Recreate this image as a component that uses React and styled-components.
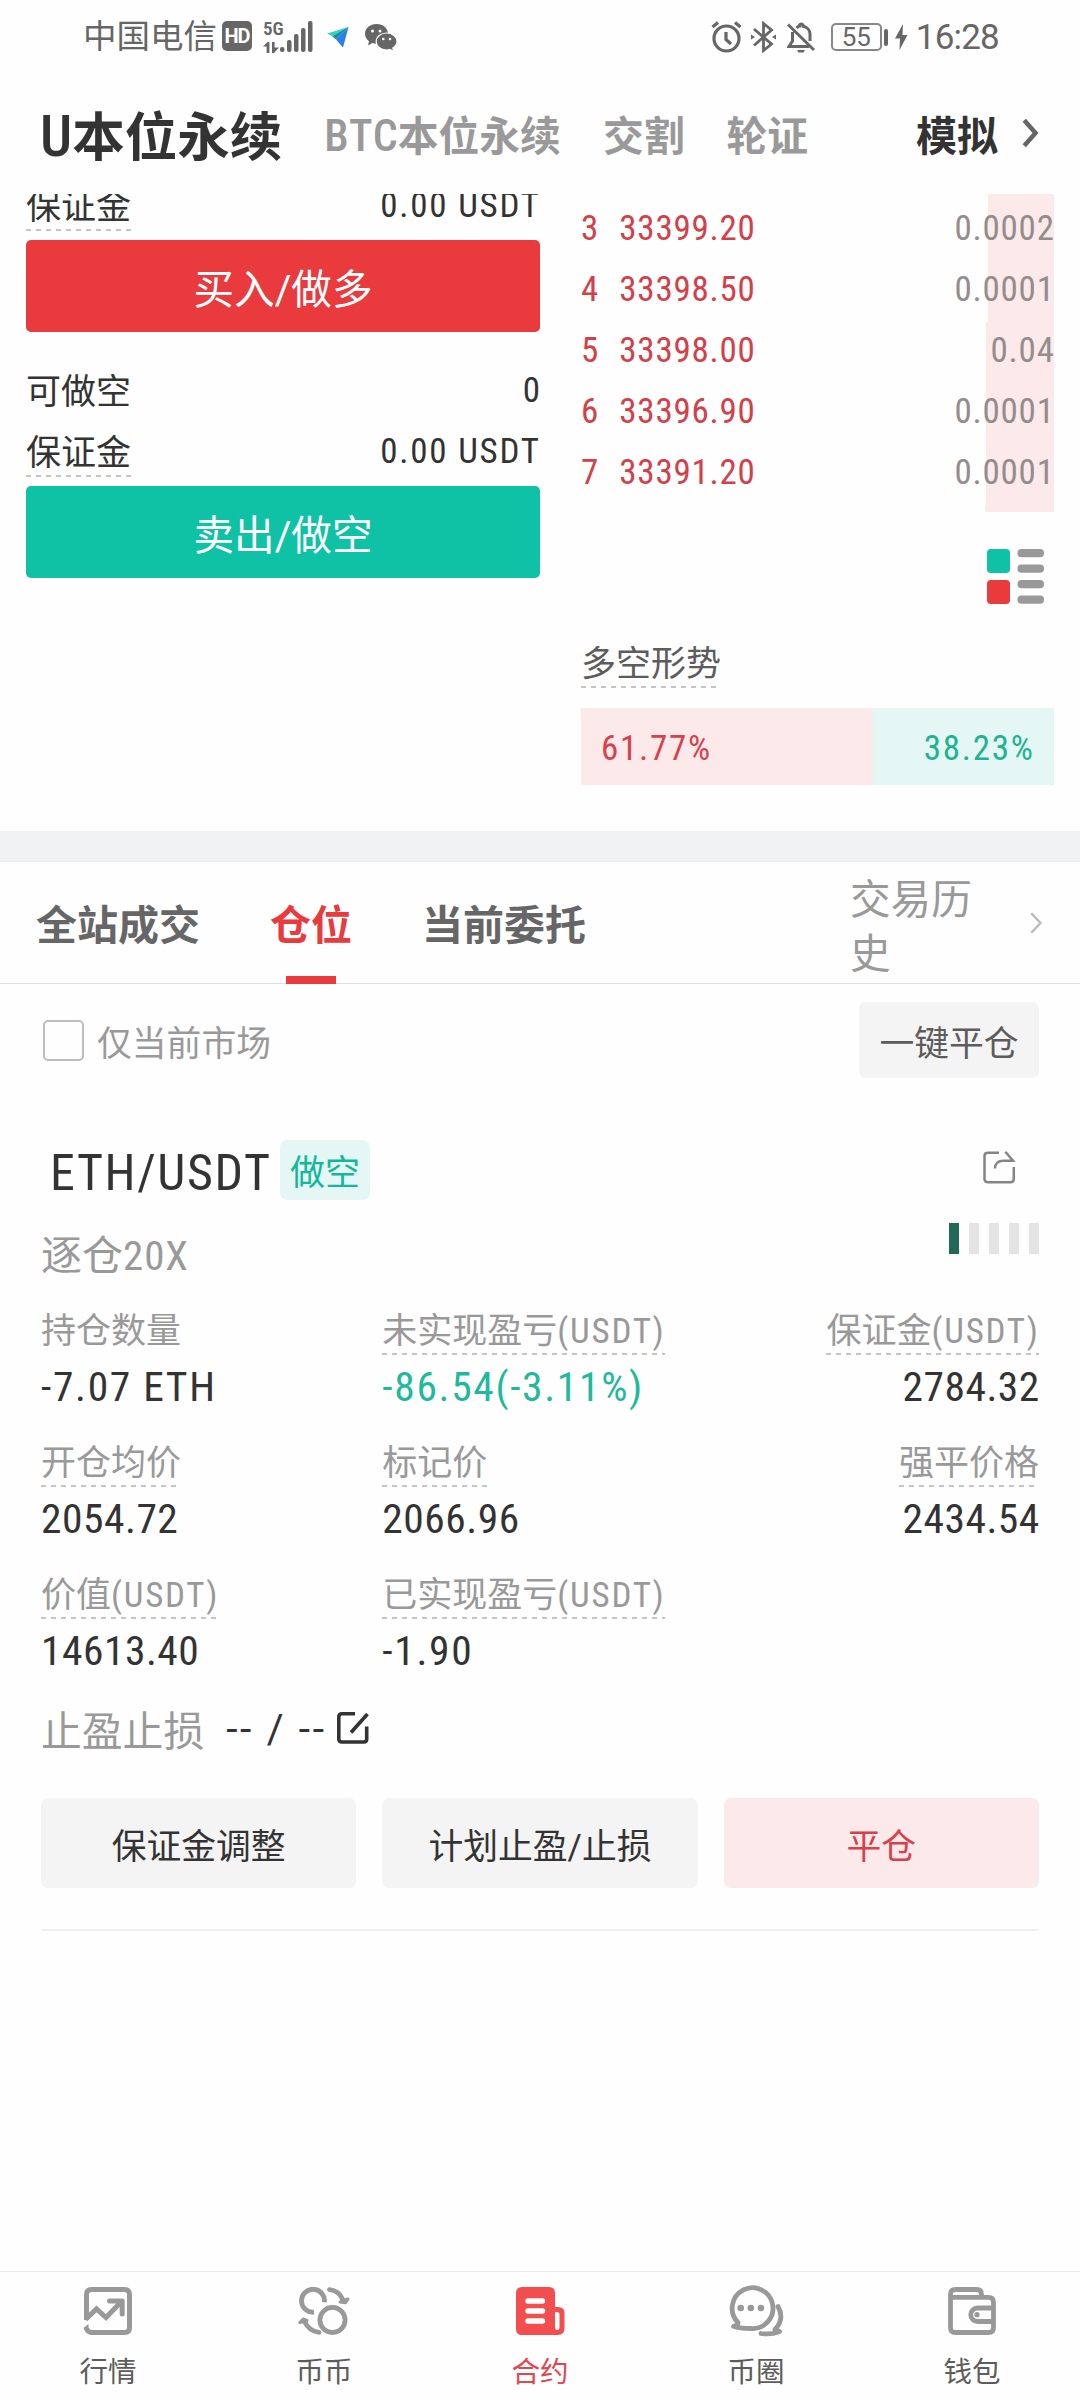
import styled, { createGlobalStyle, css } from "styled-components";

const colors = {
  red: "#e93b3d",
  green: "#10c2a5",
  dark: "#333333",
  mid: "#666666",
  light: "#999999",
  redBg: "#fce9ea",
  greenBg: "#e5f7f5",
  greyBg: "#f4f4f4",
};

const GlobalStyle = createGlobalStyle`
  * { box-sizing: border-box; }
  body {
    margin: 0;
    background: #fefefe;
    font-family: Roboto, "Noto Sans CJK SC", sans-serif;
    color: ${colors.dark};
  }
  svg { display: block; flex: none; }
`;

const Screen = styled.div`
  display: flex;
  flex-direction: column;
  width: 1080px;
  height: 2400px;
  overflow: hidden;
  white-space: nowrap;
`;

// latin letters and digits use a narrow face next to the chinese text
const Num = styled.span`
  margin-right: -0.02em;
  font-family: "Roboto Condensed", Roboto, sans-serif;
  font-weight: ${p => p.$weight || 400};
  letter-spacing: ${p => (p.$wide ? 0.05 : 0.022)}em;
`;

/* ---------- status bar ---------- */
const StatusBar = styled.div`
  display: flex;
  align-items: center;
  height: 74px;
  padding: 0 81px 0 83px;
  color: #666;
`;
const Carrier = styled.span`
  font-size: 33.5px;
  line-height: 78px;
`;
const HdBadge = styled.span`
  width: 30px;
  height: 30px;
  margin: -2px 0 0 5px;
  border-radius: 5px;
  background: #666;
  color: #fff;
  font-size: 20px;
  font-weight: 700;
  line-height: 31px;
  text-align: center;
  letter-spacing: -1px;
`;
const Network = styled.div`
  display: flex;
  flex-direction: column;
  align-items: flex-start;
  justify-content: space-between;
  width: 17px;
  height: 32px;
  margin: -1px 0 0 11px;
  font-family: "Roboto Condensed", Roboto, sans-serif;
  font-size: 19px;
  font-weight: 600;
  line-height: 16px;
`;
const Spacer = styled.div`
  flex: ${p => (p.$w ? `0 0 ${p.$w}px` : 1)};
`;
const Battery = styled.div`
  display: flex;
  align-items: center;
  justify-content: center;
  width: 51px;
  height: 28px;
  border: 2px solid #888;
  border-radius: 5px;
  font-size: 26px;
`;
const BatteryTip = styled.div`
  width: 4px;
  height: 17px;
  margin-left: 2px;
  border-radius: 2px;
  background: #666;
`;
const Clock = styled.span`
  font-size: 35px;
  letter-spacing: -0.8px;
`;

/* ---------- top tabs ---------- */
const TopTabs = styled.div`
  display: flex;
  align-items: center;
  height: 120px;
  padding: 0 40px 2px 40px;
  font-weight: 700;
`;
const TopTab = styled.span`
  margin-right: 42px;
  font-size: ${p => (p.$active ? 52.5 : 40.8)}px;
  color: ${p => (p.$active ? colors.dark : colors.light)};
  ${Num} {
    font-size: 1.08em;
    letter-spacing: 0.02em;
  }
`;
const Simulate = styled.span`
  margin-left: auto;
  margin-right: 24px;
  font-size: 41px;
`;

/* ---------- trade area ---------- */
const TradeArea = styled.div`
  display: flex;
  justify-content: space-between;
  height: 637px;
  padding: 0 26px;
  overflow: hidden;
`;
const OrderPanel = styled.div`
  width: 514px;
  margin-top: -19px;
`;
const InfoRow = styled.div`
  display: flex;
  align-items: center;
  justify-content: space-between;
  height: 61px;
  font-size: 35px;
`;
const dashed = css`
  background: repeating-linear-gradient(90deg, #c4c4c4 0 5px, transparent 5px 10px) left bottom / 100% 2px no-repeat;
`;
const Label = styled.span`
  display: inline-block;
  height: 50px;
  line-height: 53px;
  font-size: 35px;
  color: ${p => p.$color || "inherit"};
  ${p => p.$dashed && dashed}
`;
const OrderButton = styled.button`
  display: block;
  width: 100%;
  height: 92px;
  margin: 4px 0 28px;
  padding: 0;
  border: none;
  border-radius: 5px;
  background: ${p => p.$bg};
  color: #fff;
  font: inherit;
  font-size: 40.6px;
`;

const BookPanel = styled.div`
  display: flex;
  flex-direction: column;
  width: 473px;
`;
const BookList = styled.div`
  height: 318px;
  overflow: hidden;
`;
const BookRows = styled.div`
  margin-top: -55px;
`;
const BookRow = styled.div`
  display: flex;
  align-items: center;
  height: 61px;
  padding-bottom: 5px;
  font-size: 35px;
  color: #d3404a;
  background: linear-gradient(${colors.redBg}, ${colors.redBg}) right / ${p => p.$depth}px 100% no-repeat;
`;
const Level = styled(Num)`
  width: 39px;
`;
const Amount = styled(Num)`
  margin-left: auto;
  color: #948c8d;
`;
const BookMode = styled.div`
  align-self: flex-end;
  margin: 37px 10px 34px 0;
`;
const RatioBar = styled.div`
  display: flex;
  height: 77px;
  margin-top: 20px;
  font-size: 35px;
  line-height: 82px;
`;
const RatioPart = styled.div`
  width: ${p => p.$w}px;
  padding: 0 20px;
  text-align: ${p => p.$align};
  color: ${p => p.$color};
  background: ${p => p.$bg};
`;

/* ---------- positions ---------- */
const Divider = styled.div`
  height: 31px;
  background: #f0f2f4;
  border-bottom: 1px solid #ebedef;
`;
const TabBar = styled.div`
  display: flex;
  align-items: stretch;
  height: 122px;
  padding: 0 37px 0 36px;
  border-bottom: 1px solid #dedede;
`;
const Tab = styled.div`
  display: flex;
  flex-direction: column;
  align-items: center;
  height: 122px;
  margin-right: 70px;
  font-size: 41px;
  font-weight: 700;
  line-height: 129px;
  color: ${p => (p.$active ? colors.red : colors.mid)};
  &::after {
    content: "";
    flex: none;
    width: 50px;
    height: 8px;
    margin-top: -15px;
    background: ${p => (p.$active ? colors.red : "transparent")};
  }
`;
const History = styled.div`
  width: 131px;
  margin: 11px 49px 0 auto;
  font-size: 40.6px;
  line-height: 54px;
  color: ${colors.light};
  white-space: normal;
`;
const HistoryArrow = styled.div`
  align-self: center;
`;

const Positions = styled.div`
  display: flex;
  flex-direction: column;
  flex: 1;
  padding: 0 41px;
`;
const FilterRow = styled.div`
  display: flex;
  align-items: center;
  height: 76px;
  margin-top: 18px;
  font-size: 34.8px;
  color: ${colors.light};
`;
const Checkbox = styled.span`
  width: 41px;
  height: 41px;
  margin: 0 13px 0 2px;
  border: 2.5px solid #bdbdbd;
  border-radius: 5px;
`;
const FilterText = styled.span`
  padding-top: 2px;
`;
const CloseAll = styled.button`
  width: 180px;
  height: 76px;
  margin-left: auto;
  padding: 2px 0 0;
  border: none;
  border-radius: 7px;
  background: ${colors.greyBg};
  color: #5c5c5c;
  font: inherit;
`;
const PairRow = styled.div`
  display: flex;
  align-items: center;
  height: 60px;
  margin-top: 62px;
  padding: 0 23px 0 9px;
`;
const Pair = styled(Num)`
  width: 222px;
  margin: 0;
  padding-top: 5px;
  font-size: 50px;
  letter-spacing: 0.032em;
`;
const Side = styled.span`
  width: 90px;
  height: 60px;
  margin-left: 8px;
  border-radius: 7px;
  background: ${colors.greenBg};
  color: #14b799;
  font-size: 35px;
  line-height: 68px;
  text-align: center;
`;
const ShareBox = styled.div`
  margin: -6px 0 0 auto;
`;
const LeverRow = styled.div`
  display: flex;
  justify-content: space-between;
  height: 105px;
  padding-top: 23px;
  font-size: 41px;
  line-height: 67px;
  color: ${colors.light};
`;
const Risk = styled.div`
  display: flex;
  gap: 10px;
`;
const RiskBar = styled.span`
  width: 10px;
  height: 31px;
  background: ${p => (p.$on ? "#226a57" : "#e4e4e4")};
`;
const Grid = styled.div`
  display: grid;
  grid-template-columns: repeat(3, 1fr);
  gap: 18px 26px;
`;
const Cell = styled.div`
  display: flex;
  flex-direction: column;
  align-items: ${p => (p.$right ? "flex-end" : "flex-start")};
`;
const Value = styled(Num)`
  height: 64px;
  font-size: 41.5px;
  line-height: 64px;
  letter-spacing: ${p => (p.$wide ? 0.04 : 0.012)}em;
  color: ${p => p.$color || colors.dark};
`;
const StopRow = styled.div`
  display: flex;
  align-items: center;
  height: 60px;
  margin-top: 15px;
  font-size: 40.8px;
  color: ${colors.light};
`;
const StopValue = styled.span`
  width: 111px;
  margin-left: 22px;
  padding-top: 2px;
  letter-spacing: 2.6px;
  color: ${colors.dark};
`;
const Actions = styled.div`
  display: grid;
  grid-template-columns: repeat(3, 1fr);
  gap: 26px;
  margin-top: 40px;
  padding-bottom: 41px;
  border-bottom: 2px solid #efefef;
`;
const Action = styled.button`
  height: 90px;
  padding: 1px 0 0;
  border: none;
  border-radius: 7px;
  background: ${p => (p.$danger ? colors.redBg : colors.greyBg)};
  color: ${p => (p.$danger ? "#d8414b" : colors.dark)};
  font: inherit;
  font-size: 34.8px;
`;

/* ---------- bottom nav ---------- */
const Nav = styled.nav`
  display: grid;
  grid-template-columns: repeat(5, 1fr);
  height: 129px;
  border-top: 1px solid #e9eae6;
`;
const NavItem = styled.div`
  display: flex;
  flex-direction: column;
  align-items: center;
  padding-top: 13px;
  font-size: 28.5px;
  line-height: 40px;
  color: ${p => (p.$active ? "#e0474f" : "#5c5c5c")};
`;
const NavIcon = styled.div`
  display: flex;
  align-items: center;
  height: 52px;
  margin-bottom: 16px;
`;

/* ---------- icons ---------- */
const Signal = () => (
  <svg width="33" height="32" viewBox="0 0 33 32" fill="#666">
    <rect x="0" y="26" width="4.5" height="5" rx="2" />
    <rect x="7" y="19" width="4.5" height="12" rx="2" />
    <rect x="14" y="13" width="4.5" height="18" rx="2" />
    <rect x="21" y="7" width="4.5" height="24" rx="2" />
    <rect x="28" y="0" width="4.5" height="31" rx="2" />
  </svg>
);

const DataArrows = () => (
  <svg width="16" height="11" viewBox="0 0 16 11" fill="#666">
    <path d="M0 4.5 4.6 0H6.4V11H3.6V4.5ZM9 0h2.6v5.5H16L11 11H9Z" />
  </svg>
);

const Plane = () => (
  <svg width="22" height="21" viewBox="0 0 22 21">
    <path d="M0 6.5 21.5 0 9 11Z" fill="#35d3bd" />
    <path d="M21.5 0 5.5 9.5 9 12.5Z" fill="#1c8f9e" />
    <path d="M21.5 0 16 20.5 9 12.5Z" fill="#2b7df0" />
  </svg>
);

const WeChat = () => (
  <svg width="32" height="27" viewBox="0 0 32 27">
    <path d="M11.5 0C5 0 0 4.3 0 9.8c0 3.2 1.6 5.7 4 7.5L3 21.5l4.3-2.4c1.3.4 2.7.6 4.2.6 6.5 0 11.5-4.3 11.5-9.9S18 0 11.5 0Z" fill="#666" />
    <path d="M21.5 9C15.7 9 11.2 12.8 11.2 17.5S15.7 26 21.5 26c1.2 0 2.3-.2 3.4-.5l4 2-1.1-3.4C30.2 22.6 32 20.3 32 17.5 32 12.8 27.3 9 21.5 9Z" fill="#666" stroke="#fefefe" strokeWidth="1.2" />
    <g fill="#fefefe">
      <circle cx="7.5" cy="7" r="1.5" /><circle cx="15" cy="7" r="1.5" />
      <circle cx="18.3" cy="15" r="1.3" /><circle cx="25" cy="15" r="1.3" />
    </g>
  </svg>
);

const Alarm = () => (
  <svg width="31" height="32" viewBox="0 0 31 32" fill="none" stroke="#666" strokeWidth="3.2">
    <circle cx="15.5" cy="17.5" r="12.5" />
    <path d="M15 11v7.5l5 4.5M1.5 6 7 1.5M29.5 6 24 1.5" />
  </svg>
);

const Bluetooth = () => (
  <svg width="25" height="32" viewBox="0 0 25 32" fill="none" stroke="#666" strokeWidth="2.8">
    <path d="M3 8 20.5 23 12.5 29.5V2.5L20.5 9 3 24.5" />
    <path d="M0 13.5 4 16 0 18.5ZM25 13.5 21 16l4 2.5Z" fill="#666" stroke="none" />
  </svg>
);

const BellOff = () => (
  <svg width="28" height="31" viewBox="0 0 28 31" fill="none" stroke="#666" strokeWidth="3">
    <path d="M1 2.5 27 28M5.5 10V19L2 24.5H22M9.5 6C11 4.5 12 4 12.5 4V3a2 2 0 0 1 3.5 0V4.3C20 5 23 8 23 12V19" />
    <path d="M10 28h8l-1.5 2.5h-5Z" fill="#666" stroke="none" />
  </svg>
);

const Bolt = () => (
  <svg width="13" height="26" viewBox="0 0 13 26" fill="#666">
    <path d="M8 0 0 14.5H5L4.5 26 12.5 11H7.5Z" />
  </svg>
);

const Chevron = ({ w, h, color, stroke }) => (
  <svg width={w} height={h} viewBox={`0 0 ${w} ${h}`} fill="none" stroke={color} strokeWidth={stroke}>
    <path d={`M${stroke / 2} ${stroke / 2} ${w - stroke} ${h / 2} ${stroke / 2} ${h - stroke / 2}`} />
  </svg>
);

const BookModeIcon = () => (
  <svg width="57" height="55" viewBox="0 0 57 55">
    <rect width="23" height="24" rx="4" fill={colors.green} />
    <rect y="31" width="23" height="24" rx="4" fill={colors.red} />
    {[0, 15.6, 31, 46.6].map(y => (
      <rect key={y} x="30.5" y={y} width="26.5" height="8.2" rx="4" fill="#999" />
    ))}
  </svg>
);

const Share = () => (
  <svg width="33" height="33" viewBox="0 0 33 33" fill="none" stroke="#858585" strokeWidth="2.5">
    <path d="M16 1.8H5Q1.5 1.8 1.5 5V28Q1.5 31.2 5 31.2H27.5Q30.8 31.2 30.8 28V16" />
    <path d="M12 17.5C12 12.5 15.5 9.7 20 9.7H30L22.3.8" />
  </svg>
);

const Edit = () => (
  <svg width="32" height="32" viewBox="0 0 32 32" fill="none" stroke="#333" strokeWidth="3.6">
    <path d="M18 1.8H5Q1.8 1.8 1.8 5V27Q1.8 30 5 30H27Q29.7 30 29.7 27V14.5M14 20.5 30.5 2" />
  </svg>
);

const navIcons = {
  market: (
    <svg width="48" height="48" viewBox="0 0 48 48" fill="none" stroke="#999" strokeWidth="5">
      <path d="M2.5 33V7.5q0-5 5-5H40.5q5 0 5 5V40.5q0 5-5 5H7.5q-4 0-5-4.5" />
      <path d="M1.5 32.5 12.5 22 22 30.5 37.5 14.5" />
      <path d="M25.5 14H38.2V27" strokeLinecap="round" strokeLinejoin="round" />
      <path d="M0 43V40.5L4.5 37V43Z" fill="#999" stroke="none" />
    </svg>
  ),
  spot: (
    <svg width="52" height="48" viewBox="0 0 52 48" fill="none" stroke="#999" strokeWidth="4.8">
      <circle cx="34.5" cy="33" r="12.6" />
      <path d="M26.4 15.2A11.5 11.5 0 1 0 16 25.2" />
      <path d="M31.5 2.6Q41 3.5 45 13M21 45.4Q11 44 6.5 34.5" strokeLinecap="round" />
      <path d="M42 15 50 12 47.5 15.8ZM1.8 35.5 5.2 32 9 33.5Z" fill="#999" strokeWidth="3" strokeLinejoin="round" />
    </svg>
  ),
  contract: (
    <svg width="49" height="48" viewBox="0 0 49 48">
      <path d="M6 0H33Q39 0 39 6V20H42Q48.5 20 48.5 26V41Q48.5 48 42 48H6Q0 48 0 42V6Q0 0 6 0Z" fill="#f24e50" />
      <path d="M39 25h2q2.5 0 2.5 2.5V40q0 3-2.5 3-2 0-2-3Z" fill="#fefefe" />
      <path d="M12 14H26.5M12 24H26.5M12 34H26.5" stroke="#fefefe" strokeWidth="5.4" strokeLinecap="round" />
    </svg>
  ),
  circle: (
    <svg width="57" height="52" viewBox="0 0 57 52" fill="none" stroke="#999" strokeWidth="4.8" strokeLinecap="round" strokeLinejoin="round">
      <path d="M10 37.5A20.4 20.4 0 1 1 22.5 43.5Q11 43.5 5.5 41.3 10.5 40.5 10 37.5Z" />
      <path d="M50 21.5Q57 34 47 44.5M33 48.5Q43 50 51.5 46.5L47 44.8" />
      <g fill="#999" stroke="none">
        <circle cx="12.7" cy="23" r="3.3" /><circle cx="22.8" cy="23" r="3.3" /><circle cx="33" cy="23" r="3.3" />
      </g>
    </svg>
  ),
  wallet: (
    <svg width="48" height="48" viewBox="0 0 48 48" fill="none" stroke="#999" strokeWidth="4.8">
      <path d="M2.4 10.4H40.5q5 0 5 5V40.5q0 5-5 5H7.5q-5 0-5-5V7.5q0-5 5-5H28.5q5 0 5 5V10" />
      <path d="M46 21H29.5a6.5 6.5 0 0 0 0 13.5H46" />
      <circle cx="29" cy="27.7" r="2.6" fill="#999" stroke="none" />
    </svg>
  ),
};

/* ---------- data ---------- */
// first and last rows are cut by the edges of the list
const asks = [
  { depth: 66 },
  { level: 3, price: "33399.20", amount: "0.0002", depth: 66 },
  { level: 4, price: "33398.50", amount: "0.0001", depth: 66 },
  { level: 5, price: "33398.00", amount: "0.04", depth: 68 },
  { level: 6, price: "33396.90", amount: "0.0001", depth: 68 },
  { level: 7, price: "33391.20", amount: "0.0001", depth: 68 },
  { depth: 69 },
];

const cells = [
  { label: "持仓数量", value: "-7.07 ETH", plain: true, wide: true },
  { label: "未实现盈亏", unit: true, value: "-86.54(-3.11%)", color: "#1fb99c", wide: true },
  { label: "保证金", unit: true, value: "2784.32", right: true },
  { label: "开仓均价", value: "2054.72" },
  { label: "标记价", value: "2066.96" },
  { label: "强平价格", value: "2434.54", right: true },
  { label: "价值", unit: true, value: "14613.40" },
  { label: "已实现盈亏", unit: true, value: "-1.90", wide: true },
];

const navItems = [
  { key: "market", text: "行情" },
  { key: "spot", text: "币币" },
  { key: "contract", text: "合约", active: true },
  { key: "circle", text: "币圈" },
  { key: "wallet", text: "钱包" },
];

const App = () => {
  return (
    <Screen lang="zh-CN">
      <GlobalStyle />
      <StatusBar>
        <Carrier>中国电信</Carrier>
        <HdBadge>HD</HdBadge>
        <Network>
          5G
          <DataArrows />
        </Network>
        <Signal />
        <Spacer $w={14} />
        <Plane />
        <Spacer $w={16} />
        <WeChat />
        <Spacer />
        <Alarm />
        <Spacer $w={9} />
        <Bluetooth />
        <Spacer $w={11} />
        <BellOff />
        <Spacer $w={16} />
        <Battery>55</Battery>
        <BatteryTip />
        <Spacer $w={7} />
        <Bolt />
        <Spacer $w={8} />
        <Clock>16:28</Clock>
      </StatusBar>

      <TopTabs>
        <TopTab $active><Num $weight={500}>U</Num>本位永续</TopTab>
        <TopTab><Num $weight={500}>BTC</Num>本位永续</TopTab>
        <TopTab>交割</TopTab>
        <TopTab>轮证</TopTab>
        <Simulate>模拟</Simulate>
        <Chevron w={18} h={30} color="#666" stroke={4.5} />
      </TopTabs>

      <TradeArea>
        <OrderPanel>
          <InfoRow><Label $dashed>保证金</Label><Num $wide>0.00 USDT</Num></InfoRow>
          <OrderButton $bg={colors.red}>买入/做多</OrderButton>
          <InfoRow><Label>可做空</Label><Num>0</Num></InfoRow>
          <InfoRow><Label $dashed>保证金</Label><Num $wide>0.00 USDT</Num></InfoRow>
          <OrderButton $bg={colors.green}>卖出/做空</OrderButton>
        </OrderPanel>
        <BookPanel>
          <BookList>
            <BookRows>
              {asks.map((row, i) => (
                <BookRow key={i} $depth={row.depth}>
                  <Level>{row.level}</Level>
                  <Num>{row.price}</Num>
                  <Amount>{row.amount}</Amount>
                </BookRow>
              ))}
            </BookRows>
          </BookList>
          <BookMode><BookModeIcon /></BookMode>
          <div><Label $dashed $color="#5c5c5c">多空形势</Label></div>
          <RatioBar>
            <RatioPart $w={292} $align="left" $color="#d8414b" $bg={colors.redBg}><Num $wide>61.77%</Num></RatioPart>
            <RatioPart $w={181} $align="right" $color="#1fb394" $bg={colors.greenBg}><Num $wide>38.23%</Num></RatioPart>
          </RatioBar>
        </BookPanel>
      </TradeArea>

      <Divider />
      <TabBar>
        <Tab>全站成交</Tab>
        <Tab $active>仓位</Tab>
        <Tab>当前委托</Tab>
        <History>交易历史</History>
        <HistoryArrow><Chevron w={13} h={22} color="#bbb" stroke={2.5} /></HistoryArrow>
      </TabBar>

      <Positions>
        <FilterRow>
          <Checkbox />
          <FilterText>仅当前市场</FilterText>
          <CloseAll>一键平仓</CloseAll>
        </FilterRow>
        <PairRow>
          <Pair>ETH/USDT</Pair>
          <Side>做空</Side>
          <ShareBox><Share /></ShareBox>
        </PairRow>
        <LeverRow>
          <span>逐仓<Num>20X</Num></span>
          <Risk>
            {[1, 0, 0, 0, 0].map((on, i) => <RiskBar key={i} $on={on} />)}
          </Risk>
        </LeverRow>
        <Grid>
          {cells.map(cell => (
            <Cell key={cell.label} $right={cell.right}>
              <Label $dashed={!cell.plain} $color={colors.light}>
                {cell.label}{cell.unit && <Num $wide>(USDT)</Num>}
              </Label>
              <Value $color={cell.color} $wide={cell.wide}>{cell.value}</Value>
            </Cell>
          ))}
        </Grid>
        <StopRow>
          止盈止损
          <StopValue>-- / --</StopValue>
          <Edit />
        </StopRow>
        <Actions>
          <Action>保证金调整</Action>
          <Action>计划止盈/止损</Action>
          <Action $danger>平仓</Action>
        </Actions>
      </Positions>

      <Nav>
        {navItems.map(item => (
          <NavItem key={item.key} $active={item.active}>
            <NavIcon>{navIcons[item.key]}</NavIcon>
            {item.text}
          </NavItem>
        ))}
      </Nav>
    </Screen>
  );
};

export default App;
